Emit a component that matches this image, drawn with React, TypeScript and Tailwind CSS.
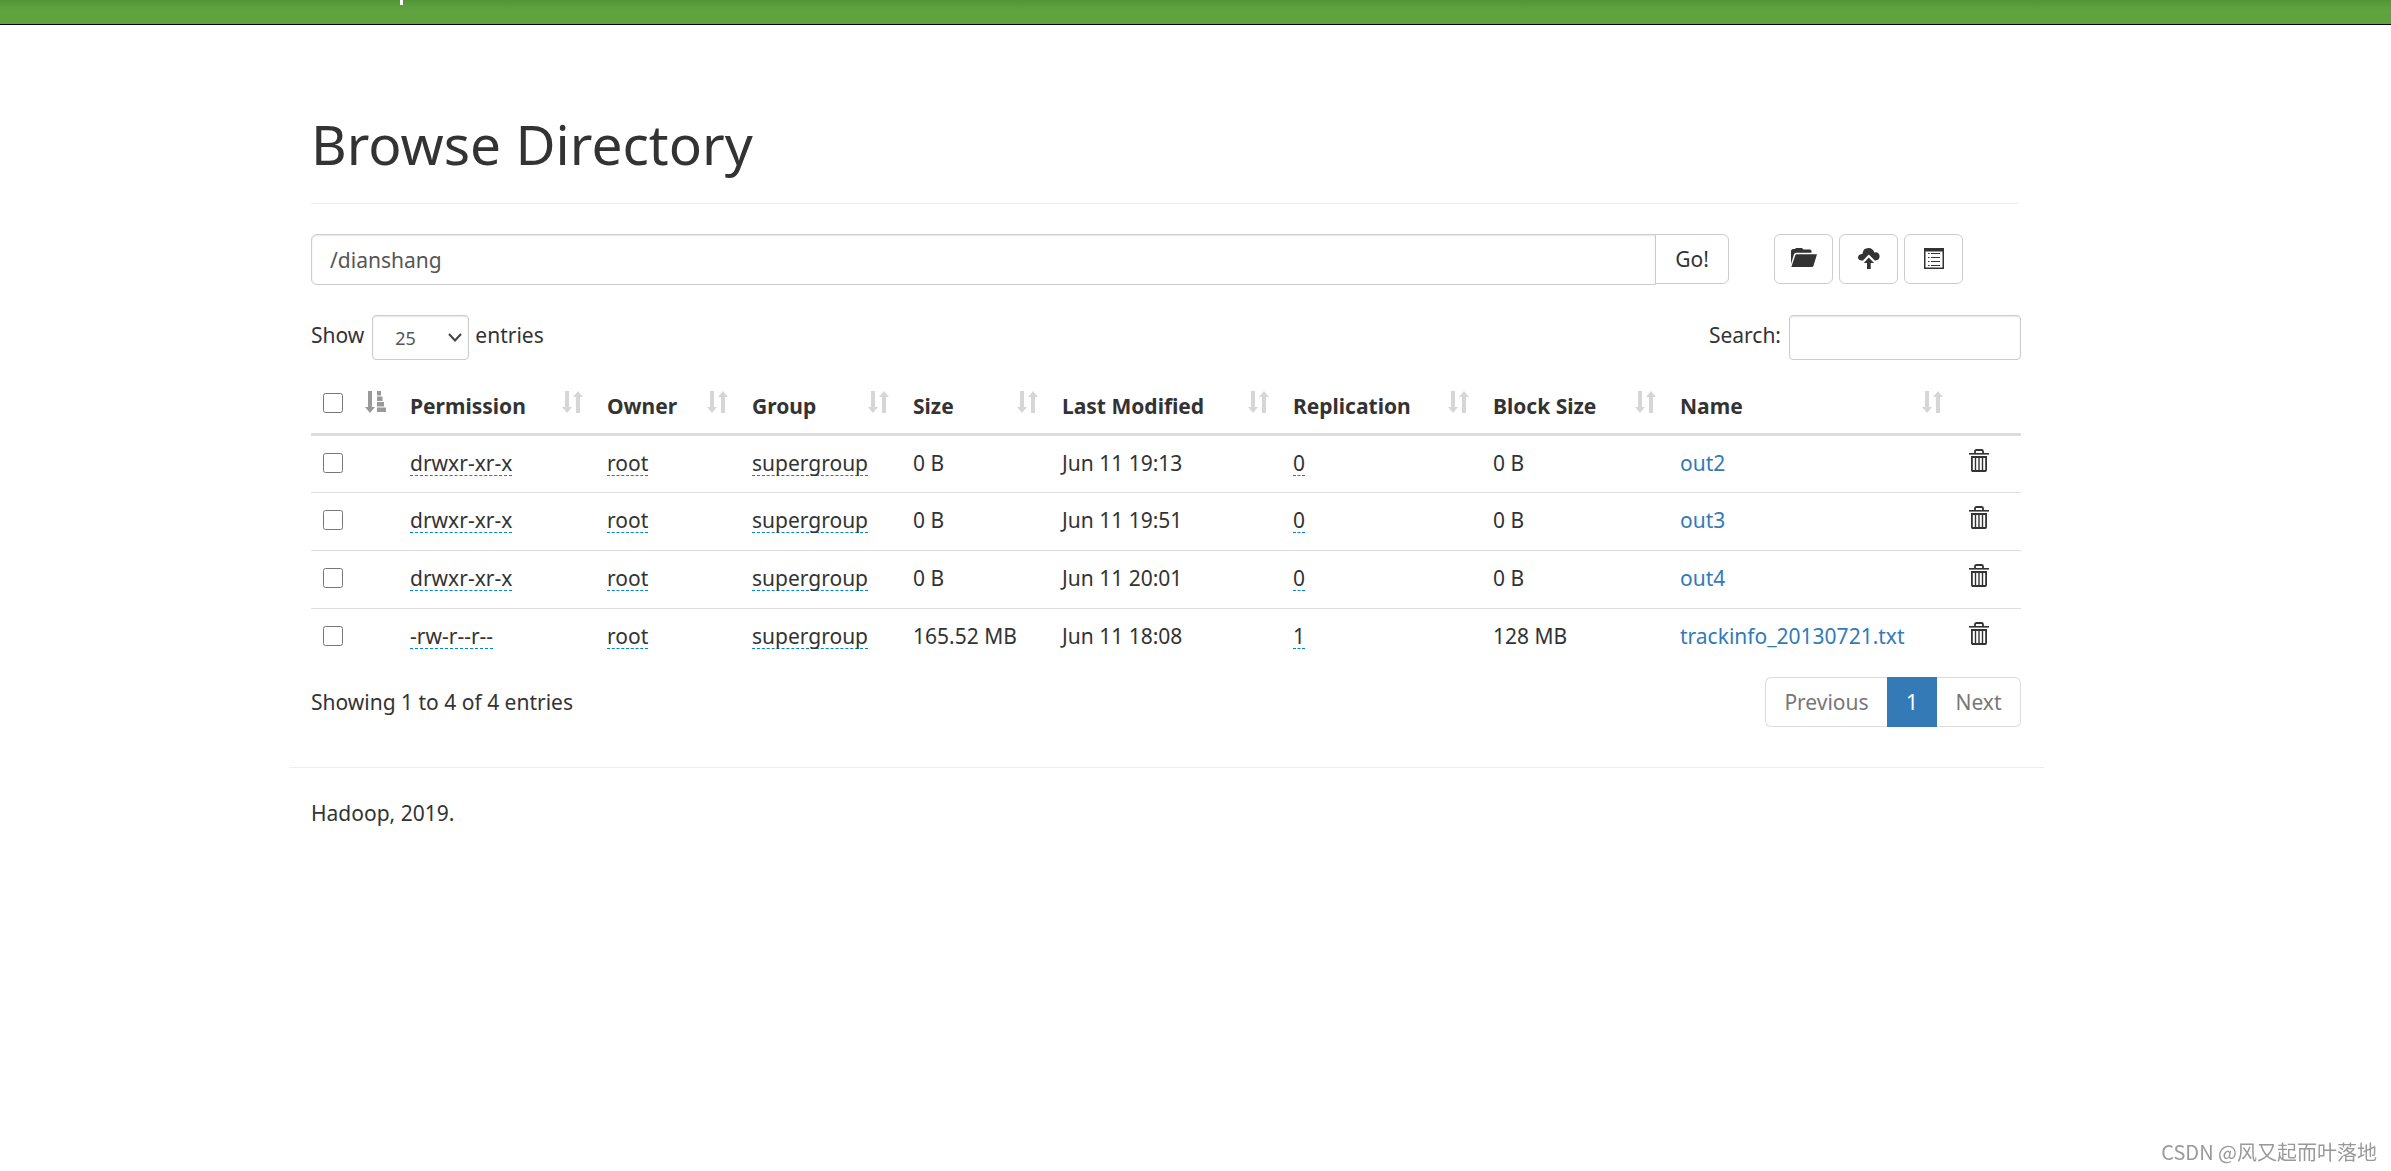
import React from "react";

interface FileEntry {
  permission: string;
  owner: string;
  group: string;
  size: string;
  modified: string;
  replication: string;
  blockSize: string;
  name: string;
}

const files: FileEntry[] = [
  { permission: "drwxr-xr-x", owner: "root", group: "supergroup", size: "0 B", modified: "Jun 11 19:13", replication: "0", blockSize: "0 B", name: "out2" },
  { permission: "drwxr-xr-x", owner: "root", group: "supergroup", size: "0 B", modified: "Jun 11 19:51", replication: "0", blockSize: "0 B", name: "out3" },
  { permission: "drwxr-xr-x", owner: "root", group: "supergroup", size: "0 B", modified: "Jun 11 20:01", replication: "0", blockSize: "0 B", name: "out4" },
  { permission: "-rw-r--r--", owner: "root", group: "supergroup", size: "165.52 MB", modified: "Jun 11 18:08", replication: "1", blockSize: "128 MB", name: "trackinfo_20130721.txt" },
];

const columns = [
  { label: "Permission", width: "w-[197px]" },
  { label: "Owner", width: "w-[145px]" },
  { label: "Group", width: "w-[161px]" },
  { label: "Size", width: "w-[149px]" },
  { label: "Last Modified", width: "w-[231px]" },
  { label: "Replication", width: "w-[200px]" },
  { label: "Block Size", width: "w-[187px]" },
  { label: "Name", width: "w-[287px]" },
];

const FolderIcon: React.FC = () => (
  <svg width="27" height="20" viewBox="0 0 27 20" fill="currentColor" aria-hidden="true">
    <path d="M1 16V2.500L2.500 1H5l1-1h6l1.500 1.500H20q1.500 0 1.500 1.500v1.700H6.200q-1.600 0-2.200 1.600z" />
    <path d="M6.600 6.200H27L23.400 18q-.4 1-1.600 1H1.300L5.200 7.400q.4-1.200 1.400-1.200z" />
  </svg>
);

const UploadIcon: React.FC = () => (
  <svg width="22" height="21" viewBox="0 0 22 21" fill="currentColor" aria-hidden="true">
    <path d="M5 12.500L10.800 6.500l6 6h.8q4-.5 4-4.200-.2-3.800-4-4-.6 0-1.200.2Q14.800 0 10.500 0 5.200.2 4.600 5q0 .5.1.8Q.2 6.200 0 9.500q.4 3 3.500 3z" />
    <path d="M10.800 9.500L5.800 15H9v6h3.700v-6H16z" />
  </svg>
);

const ListIcon: React.FC = () => (
  <svg width="20" height="21" viewBox="0 0 20 21" aria-hidden="true">
    <path fill="currentColor" fillRule="evenodd" d="M0 0h20v21H0zM1.500 3.500v16h17v-16z" />
    <path stroke="currentColor" strokeWidth="1.200" d="M4 5.500h1.500M4 9.500h1.500M4 13.500h1.500M4 17.500h1.500M7 5.500h9M7 9.500h9M7 13.500h9M7 17.500h9" />
  </svg>
);

const TrashIcon: React.FC = () => (
  <svg width="20" height="23" viewBox="0 0 20 23" fill="none" stroke="currentColor" aria-hidden="true">
    <path strokeWidth="1.800" d="M6 5V2.500Q6 1 7.500 1h5q1.500 0 1.500 1.500V5" />
    <path strokeWidth="1.600" d="M0 4.800h20" />
    <path strokeWidth="1.800" d="M2.900 8h14.200v13q0 1-1 1H3.900q-1 0-1-1z" />
    <path strokeWidth="1.400" d="M6.500 8v14M10 8v14M13.500 8v14" />
  </svg>
);

const SortIcon: React.FC = () => (
  <svg width="21" height="22" viewBox="0 0 21 22" fill="currentColor" aria-hidden="true">
    <path d="M3 0h4v16h3L5 22 0 16h3z" />
    <path d="M14 22h4V6h3L16 0l-5 6h3z" />
  </svg>
);

const SortAscIcon: React.FC = () => (
  <svg width="21" height="22" viewBox="0 0 21 22" fill="currentColor" aria-hidden="true">
    <path d="M3 0h4v16h3L5 22 0 16h3z" />
    <path d="M12 0h4v4.500h-4zM12 5.500h5.500V10H12zM12 11h7v4.500h-7zM12 16.500h9V21h-9z" />
  </svg>
);

const Editable: React.FC<{ children: React.ReactNode }> = ({ children }) => (
  <a href="#" className="inline-block border-b border-dashed border-[#0088cc] leading-6">
    {children}
  </a>
);

const iconButton =
  "flex h-[50px] w-[59px] items-center justify-center rounded-md border border-[#ccc] bg-white pb-0.5";

const App: React.FC = () => {
  return (
    <div className="min-h-screen bg-white font-['Noto_Sans','Open_Sans',sans-serif] text-[21px] leading-[30px] text-[#333]">
      <header className="h-[25px] border-b border-black bg-linear-to-b from-[#539536] to-[#5fa33e] to-40% pr-[58px]">
        <div className="mx-auto max-w-[1755px] pl-[111px]">
          <span className="block h-[5px] w-[3px] bg-white"></span>
        </div>
      </header>

      <div className="pr-[58px]">
        <main className="mx-auto max-w-[1755px] pr-[23px] pl-[22px]">
          <div className="mr-0.5 border-b border-[#eee] pt-[86px] pb-[26px]">
            <h1 className="text-[55px] leading-[66px]">Browse Directory</h1>
          </div>

          <div className="mt-[30px] flex items-start pr-[58px]">
            <form className="flex flex-1 items-start">
              <input
                type="text"
                aria-label="Directory"
                defaultValue="/dianshang"
                className="h-[51px] flex-1 rounded-l-md border border-[#ccc] px-[18px] text-[#555] shadow-[inset_0_1px_2px_rgba(0,0,0,0.1)]"
              />
              <button type="button" className="-ml-px h-[50px] w-[74px] rounded-r-md border border-[#ccc] bg-white">
                Go!
              </button>
            </form>
            <div className="ml-[45px] flex gap-1.5">
              <button type="button" aria-label="Create directory" className={iconButton}>
                <FolderIcon />
              </button>
              <button type="button" aria-label="Upload files" className={iconButton}>
                <UploadIcon />
              </button>
              <button type="button" aria-label="Cut and paste" className={iconButton}>
                <ListIcon />
              </button>
            </div>
          </div>

          <div className="mt-[30px] flex items-start justify-between">
            <div className="flex items-start">
              <label htmlFor="page-length" className="pt-[5px]">Show</label>
              <span className="relative mr-1.5 ml-2">
                <select
                  id="page-length"
                  defaultValue="25"
                  className="block h-[45px] w-[97px] appearance-none rounded border border-[#ccc] bg-white pl-[22px] text-[18px] text-[#555] shadow-[inset_0_1px_2px_rgba(0,0,0,0.1)]"
                >
                  <option>25</option>
                  <option>50</option>
                  <option>100</option>
                </select>
                <svg className="pointer-events-none absolute top-[18px] right-[7px]" width="14" height="9" viewBox="0 0 14 9" fill="none" stroke="#444" strokeWidth="2" aria-hidden="true">
                  <path d="M1 1l6 6.500L13 1" />
                </svg>
              </span>
              <span className="pt-[5px]">entries</span>
            </div>
            <div className="flex items-start">
              <label htmlFor="search" className="pt-[5px] pr-2">Search:</label>
              <input
                id="search"
                type="search"
                className="h-[45px] w-[232px] rounded border border-[#ccc] px-4 shadow-[inset_0_1px_2px_rgba(0,0,0,0.1)]"
              />
            </div>
          </div>

          <table className="mt-[18px] w-full table-fixed border-collapse text-left">
            <thead>
              <tr className="h-[56px] border-b-3 border-[#ddd] align-top">
                <th className="w-[87px] px-3 pt-[13px]">
                  <div className="flex h-[22px] justify-between">
                    <input type="checkbox" aria-label="Select all" className="mt-0.5 size-5" />
                    <span className="text-[#999]">
                      <SortAscIcon />
                    </span>
                  </div>
                </th>
                {columns.map((column) => (
                  <th key={column.label} className={`${column.width} px-3 pt-[13px] font-bold whitespace-nowrap`}>
                    <div className="flex h-[30px] items-start justify-between">
                      {column.label}
                      <span className="text-[#d6d6d6]">
                        <SortIcon />
                      </span>
                    </div>
                  </th>
                ))}
                <th className="w-[66px]"></th>
              </tr>
            </thead>
            <tbody>
              {files.map((file) => (
                <tr key={file.name} className="h-[58px] border-b border-[#ddd] align-top whitespace-nowrap last:border-b-0">
                  <td className="px-3 pt-[17px]">
                    <input type="checkbox" aria-label={`Select ${file.name}`} className="block size-5" />
                  </td>
                  <td className="px-3 pt-3"><Editable>{file.permission}</Editable></td>
                  <td className="px-3 pt-3"><Editable>{file.owner}</Editable></td>
                  <td className="px-3 pt-3"><Editable>{file.group}</Editable></td>
                  <td className="px-3 pt-3">{file.size}</td>
                  <td className="px-3 pt-3">{file.modified}</td>
                  <td className="px-3 pt-3"><Editable>{file.replication}</Editable></td>
                  <td className="px-3 pt-3">{file.blockSize}</td>
                  <td className="px-3 pt-3">
                    <a href="#" className="text-[#337ab7]">{file.name}</a>
                  </td>
                  <td className="px-3 pt-[13px]">
                    <button type="button" aria-label={`Delete ${file.name}`} className="ml-0.5 block">
                      <TrashIcon />
                    </button>
                  </td>
                </tr>
              ))}
            </tbody>
          </table>

          <div className="mt-[11px] flex items-start justify-between">
            <p className="pt-2.5">Showing 1 to 4 of 4 entries</p>
            <nav aria-label="Pages" className="flex h-[50px]">
              <a href="#" className="flex w-[122px] items-center justify-center rounded-l-md border border-r-0 border-[#ddd] text-[#777]">Previous</a>
              <a href="#" className="flex w-[50px] items-center justify-center bg-[#337ab7] text-white">1</a>
              <a href="#" className="flex w-[84px] items-center justify-center rounded-r-md border border-l-0 border-[#ddd] text-[#777]">Next</a>
            </nav>
          </div>
        </main>

        <footer className="mx-auto mt-10 max-w-[1755px] border-t border-[#eee] px-[22px] pt-[30px]">
          <p>Hadoop, 2019.</p>
        </footer>
      </div>

      <p className="fixed right-[14px] bottom-1 font-['Noto_Sans_CJK_SC',sans-serif] text-[20px] text-[#999]">
        CSDN @风又起而叶落地
      </p>
    </div>
  );
};

export default App;
